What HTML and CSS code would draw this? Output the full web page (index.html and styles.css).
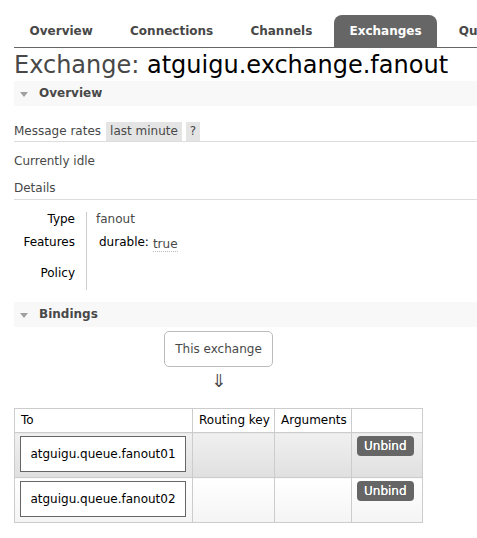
FILE: index.html
```html
<!DOCTYPE html>
<html>
<head>
<meta charset="utf-8">
<link rel="stylesheet" href="styles.css">
</head>
<body>
<div class="page">
  <nav class="menu">
    <ul>
      <li><a>Overview</a></li>
      <li><a>Connections</a></li>
      <li><a>Channels</a></li>
      <li><a class="selected">Exchanges</a></li>
      <li><a>Queues</a></li>
      <li><a>Admin</a></li>
    </ul>
  </nav>
  <h1>Exchange: <b>atguigu.exchange.fanout</b></h1>

  <div class="section">
    <h2><span class="tri"></span>Overview</h2>
    <div class="hider">
      <div class="rates">Message rates <span class="chip">last minute</span><span class="chip q">?</span></div>
      <p class="idle">Currently idle</p>
      <h3 class="details">Details</h3>
      <table class="facts">
        <tr class="r1"><th>Type</th><td>fanout</td></tr>
        <tr class="r2"><th>Features</th><td><span class="feat"><span class="fk">durable:</span><abbr class="fv">true</abbr></span></td></tr>
        <tr class="r3"><th>Policy</th><td></td></tr>
      </table>
    </div>
  </div>

  <div class="section">
    <h2><span class="tri"></span>Bindings</h2>
    <div class="bindings">
      <div class="wrap">
        <div class="center"><span class="this">This exchange</span></div>
        <div class="arrow">⇓</div>
        <table class="list">
          <thead>
            <tr><th class="c1">To</th><th class="c2">Routing key</th><th class="c3">Arguments</th><th class="c4"></th></tr>
          </thead>
          <tbody>
            <tr class="odd"><td><span class="queue">atguigu.queue.fanout01</span></td><td></td><td></td><td><span class="btn">Unbind</span></td></tr>
            <tr class="even"><td><span class="queue">atguigu.queue.fanout02</span></td><td></td><td></td><td><span class="btn">Unbind</span></td></tr>
          </tbody>
        </table>
      </div>
    </div>
  </div>
</div>
</body>
</html>
```

FILE: styles.css
```css
html, body {
  margin: 0;
  padding: 0;
  overflow: hidden;
  background: #fff;
}
body {
  font-family: "DejaVu Sans", Verdana, sans-serif;
  font-size: 12px;
  color: #484848;
}
.page {
  padding: 15px 0 0 14px;
}
.menu {
  border-bottom: 1px solid #666;
  overflow: hidden;
}
.menu ul {
  display: flex;
  flex-wrap: nowrap;
  margin: 0;
  padding: 0;
  list-style: none;
}
.menu li {
  flex: none;
  padding-right: 1px;
}
.menu a {
  display: block;
  padding: 8px 15.6px;
  margin-right: 5px;
  line-height: 16px;
  font-weight: bold;
  color: #484848;
  white-space: nowrap;
}
.menu a.selected {
  background: #666;
  color: #fff;
  border-radius: 8px 8px 0 0;
}
h1 {
  margin: 0;
  padding-top: 2px;
  font-size: 24px;
  line-height: 31px;
  font-weight: normal;
  color: #484848;
  white-space: nowrap;
}
h1 b {
  font-weight: normal;
  color: #000;
}
.section h2 {
  margin: 0;
  padding: 5px 5px 5px 25px;
  line-height: 15px;
  font-size: 12px;
  font-weight: bold;
  background: #f8f8f8;
  color: #484848;
  position: relative;
}
.tri {
  position: absolute;
  left: 6px;
  top: 11px;
  width: 0;
  height: 0;
  border-left: 4px solid transparent;
  border-right: 4px solid transparent;
  border-top: 5px solid #a0a0a0;
}
.rates {
  margin-top: 16px;
  line-height: 19px;
  border-bottom: 1px solid #ddd;
  display: flex;
  align-items: center;
}
.chip {
  background: #e4e4e4;
  padding: 0 4px;
  margin-left: 5px;
  line-height: 19px;
}
.chip.q {
  margin-left: 4px;
  padding: 0 4px;
}
.idle {
  margin: 12px 0 0 0;
  line-height: 15px;
}
.details {
  margin: 12px 0 0 0;
  font-size: 12px;
  font-weight: normal;
  line-height: 15px;
  padding-bottom: 3px;
  border-bottom: 1px solid #ddd;
}
.facts {
  margin-top: 12px;
  border-collapse: collapse;
}
.facts th {
  text-align: right;
  font-weight: normal;
  color: #000;
  vertical-align: top;
  width: 61px;
  padding: 0 11px 0 0;
  line-height: 15px;
}
.facts td {
  border-left: 1px solid #ccc;
  vertical-align: top;
  padding: 0 0 0 9px;
  line-height: 15px;
  min-width: 100px;
}
.facts .r1 th, .facts .r1 td { height: 23px; }
.facts .r2 th, .facts .r2 td { height: 31px; }
.facts .r3 th, .facts .r3 td { height: 24px; }
.feat {
  display: inline-flex;
  align-items: flex-start;
  padding-left: 3px;
}
.fk {
  color: #000;
}
.fv {
  margin-left: 4px;
  margin-top: 2px;
  text-decoration: none;
  border-bottom: 1px dotted #bbb;
  line-height: 14px;
}
.section + .section {
  margin-top: 12px;
}
.wrap {
  display: inline-block;
}
.center {
  text-align: center;
  margin-top: 4px;
}
.this {
  display: inline-block;
  border: 1px solid #bbb;
  border-radius: 5px;
  padding: 10px 10px;
  line-height: 14px;
  color: #484848;
}
.arrow {
  text-align: center;
  font-size: 18px;
  line-height: 22px;
  margin: 3px 0 16px 0;
  color: #484848;
}
.list {
  border-collapse: collapse;
  table-layout: fixed;
  width: 409px;
}
.list th, .list td {
  border: 1px solid #ccc;
  text-align: left;
  vertical-align: top;
}
.list th {
  font-weight: normal;
  color: #000;
  height: 23px;
  padding: 0 6px;
  line-height: 23px;
  white-space: nowrap;
  background: #fff;
}
.list .c1 { width: 165px; }
.list .c2 { width: 69px; }
.list .c3 { width: 64px; }
.list .c4 { width: 58px; }
.list td {
  height: 38px;
  padding: 3px 6px 3px 5px;
}
.list tr.odd td {
  background: linear-gradient(#f0f0f0, #e0e0e0);
}
.list tr.even td {
  background: linear-gradient(#ffffff, #f4f4f4);
}
.queue {
  display: block;
  border: 1px solid #666;
  background: #fff;
  text-align: center;
  line-height: 34px;
  color: #000;
  white-space: nowrap;
}
.btn {
  display: inline-block;
  background: #666;
  color: #fff;
  border-radius: 4px;
  padding: 0 7px;
  line-height: 20px;
  font-weight: normal;
  font-size: 12px;
  text-shadow: 0 0 0.5px #fff;
}
```
